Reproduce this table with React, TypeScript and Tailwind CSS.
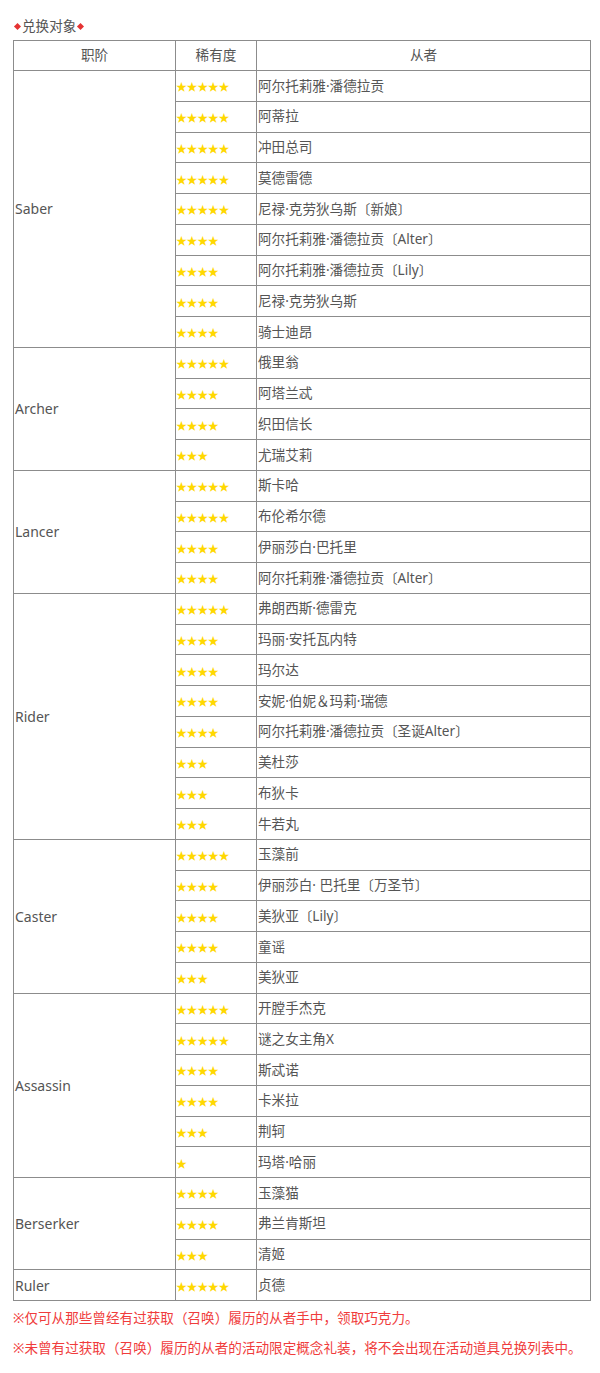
import React from "react";

type Row = [number, string];
type Group = { cls: string; rows: Row[] };

const groups: Group[] = [
  {
    cls: "Saber",
    rows: [
      [5, "阿尔托莉雅·潘德拉贡"],
      [5, "阿蒂拉"],
      [5, "冲田总司"],
      [5, "莫德雷德"],
      [5, "尼禄·克劳狄乌斯〔新娘〕"],
      [4, "阿尔托莉雅·潘德拉贡〔Alter〕"],
      [4, "阿尔托莉雅·潘德拉贡〔Lily〕"],
      [4, "尼禄·克劳狄乌斯"],
      [4, "骑士迪昂"],
    ],
  },
  {
    cls: "Archer",
    rows: [
      [5, "俄里翁"],
      [4, "阿塔兰忒"],
      [4, "织田信长"],
      [3, "尤瑞艾莉"],
    ],
  },
  {
    cls: "Lancer",
    rows: [
      [5, "斯卡哈"],
      [5, "布伦希尔德"],
      [4, "伊丽莎白·巴托里"],
      [4, "阿尔托莉雅·潘德拉贡〔Alter〕"],
    ],
  },
  {
    cls: "Rider",
    rows: [
      [5, "弗朗西斯·德雷克"],
      [4, "玛丽·安托瓦内特"],
      [4, "玛尔达"],
      [4, "安妮·伯妮＆玛莉·瑞德"],
      [4, "阿尔托莉雅·潘德拉贡〔圣诞Alter〕"],
      [3, "美杜莎"],
      [3, "布狄卡"],
      [3, "牛若丸"],
    ],
  },
  {
    cls: "Caster",
    rows: [
      [5, "玉藻前"],
      [4, "伊丽莎白· 巴托里〔万圣节〕"],
      [4, "美狄亚〔Lily〕"],
      [4, "童谣"],
      [3, "美狄亚"],
    ],
  },
  {
    cls: "Assassin",
    rows: [
      [5, "开膛手杰克"],
      [5, "谜之女主角X"],
      [4, "斯忒诺"],
      [4, "卡米拉"],
      [3, "荆轲"],
      [1, "玛塔·哈丽"],
    ],
  },
  {
    cls: "Berserker",
    rows: [
      [4, "玉藻猫"],
      [4, "弗兰肯斯坦"],
      [3, "清姬"],
    ],
  },
  {
    cls: "Ruler",
    rows: [[5, "贞德"]],
  },
];

const font = {
  fontFamily: '"Noto Sans", "Noto Sans CJK SC", sans-serif',
};

export default function App() {
  let rowIndex = 2;
  const cells: React.ReactNode[] = [];
  groups.forEach((g) => {
    const start = rowIndex;
    cells.push(
      <div
        key={g.cls}
        className="bg-white flex items-center pl-[1px] text-[14px] text-[#555]"
        style={{ gridColumn: "1", gridRow: `${start} / span ${g.rows.length}` }}
      >
        {g.cls}
      </div>
    );
    g.rows.forEach(([n, name], i) => {
      const r = start + i;
      cells.push(
        <div
          key={`${g.cls}-s-${i}`}
          className="bg-white flex items-center pt-[2px] text-[11px] leading-none text-[#ffd800]"
          style={{ gridColumn: "2", gridRow: `${r}` }}
        >
          <span
            style={{ fontFamily: '"Noto Sans CJK SC", sans-serif' }}
            className="tracking-[-0.4px]"
          >
            {"★".repeat(n)}
          </span>
        </div>
      );
      cells.push(
        <div
          key={`${g.cls}-n-${i}`}
          className="bg-white flex items-center pl-[1px] text-[13.6px] text-[#555] whitespace-nowrap"
          style={{ gridColumn: "3", gridRow: `${r}` }}
        >
          {name}
        </div>
      );
    });
    rowIndex += g.rows.length;
  });

  return (
    <div className="w-[600px] h-[1373px] bg-white overflow-hidden" style={font}>
      <div className="pl-[13px] pt-[16px]">
        <div className="flex items-center h-[20px] text-[13.6px] text-[#555]">
          <span className="inline-block w-[5px] h-[5px] bg-[#e53333] rotate-45 mx-[1.5px]" />
          <span className="ml-[1px]">兑换对象</span>
          <span className="inline-block w-[5px] h-[5px] bg-[#e53333] rotate-45 mx-[2px]" />
        </div>
        <div className="mt-[4px] w-[578px] grid grid-cols-[161px_80px_333px] grid-rows-[29px_repeat(40,29.75px)] gap-px p-px bg-[#8c8c8c]">
          <div className="bg-white flex items-center justify-center text-[13.6px] text-[#555]">职阶</div>
          <div className="bg-white flex items-center justify-center text-[13.6px] text-[#555]">稀有度</div>
          <div className="bg-white flex items-center justify-center text-[13.6px] text-[#555]">从者</div>
          {cells}
        </div>
        <div className="mt-[2px] text-[13.6px] leading-[30px] text-[#f03c3c] whitespace-nowrap">
          <p>※仅可从那些曾经有过获取（召唤）履历的从者手中，领取巧克力。</p>
          <p>※未曾有过获取（召唤）履历的从者的活动限定概念礼装，将不会出现在活动道具兑换列表中。</p>
        </div>
      </div>
    </div>
  );
}
